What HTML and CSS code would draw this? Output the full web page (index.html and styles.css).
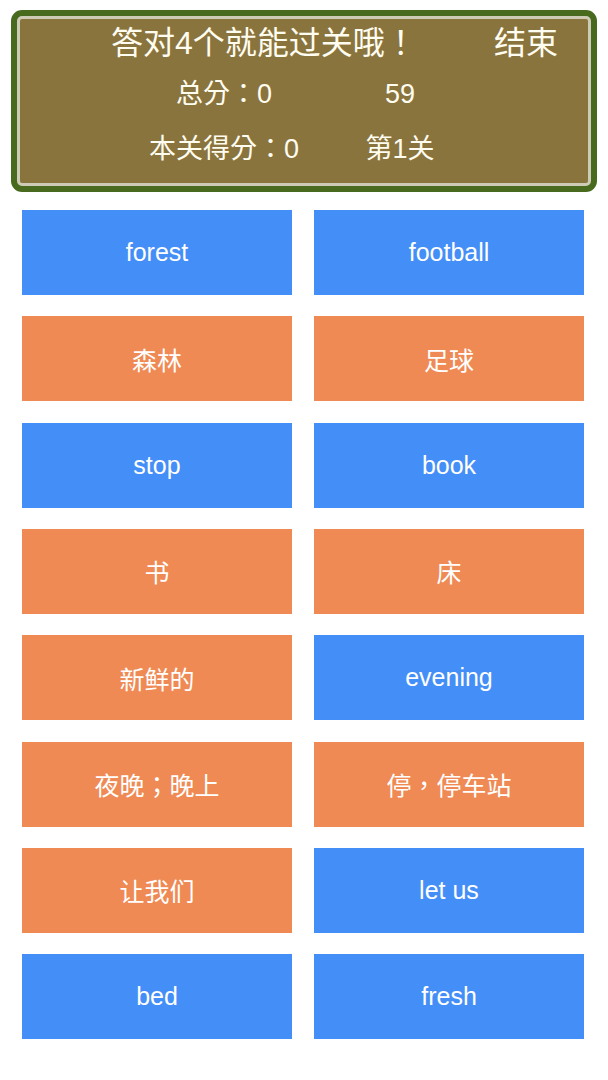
FILE: index.html
```html
<!DOCTYPE html>
<html lang="zh-Hant">
<head>
<meta charset="utf-8">
<title>单词配对</title>
<link rel="stylesheet" href="styles.css">
</head>
<body>
<header class="board">
  <div class="board-inner">
    <div class="title-row">
      <span class="title">答对4个就能过关哦！</span>
      <span class="end">结束</span>
    </div>
    <div class="stat-row stat-row-1">
      <span class="stat">总分：0</span>
      <span class="stat">59</span>
    </div>
    <div class="stat-row stat-row-2">
      <span class="stat">本关得分：0</span>
      <span class="stat">第1关</span>
    </div>
  </div>
</header>
<main class="cards">
  <div class="card blue">forest</div>
  <div class="card blue">football</div>
  <div class="card orange">森林</div>
  <div class="card orange">足球</div>
  <div class="card blue">stop</div>
  <div class="card blue">book</div>
  <div class="card orange">书</div>
  <div class="card orange">床</div>
  <div class="card orange">新鲜的</div>
  <div class="card blue">evening</div>
  <div class="card orange">夜晚；晚上</div>
  <div class="card orange">停，停车站</div>
  <div class="card orange">让我们</div>
  <div class="card blue">let us</div>
  <div class="card blue">bed</div>
  <div class="card blue">fresh</div>
</main>
</body>
</html>
```

FILE: styles.css
```css
html, body {
  margin: 0;
  padding: 0;
  background: #ffffff;
}

body {
  font-family: "Liberation Sans", "Noto Sans CJK TC", sans-serif;
  width: 608px;
  height: 1080px;
  overflow: hidden;
}

.board {
  margin: 10px 11px 0 11px;
  height: 182px;
  box-sizing: border-box;
  border: 6px solid #476a1f;
  border-radius: 11px;
  background: #476a1f;
}

.board-inner {
  box-sizing: border-box;
  height: 100%;
  border: 3px solid #cdcbb6;
  border-radius: 5px;
  background: #8a743e;
  color: #fffcf0;
}

.title-row {
  display: flex;
  justify-content: space-between;
  align-items: center;
  height: 40px;
  margin-top: 4px;
  padding: 0 30px 0 91px;
  font-size: 32px;
  line-height: 40px;
}

.stat-row {
  display: grid;
  grid-template-columns: 1fr 1fr;
  padding: 0 100px 0 116px;
  font-size: 27px;
  line-height: 34px;
  height: 34px;
}

.stat-row-1 {
  margin-top: 14px;
}

.stat-row-2 {
  margin-top: 21px;
}

.stat {
  text-align: center;
  white-space: nowrap;
}

.cards {
  display: grid;
  grid-template-columns: 270px 270px;
  grid-auto-rows: 85px;
  column-gap: 22px;
  row-gap: 21.33px;
  margin-top: 18px;
  padding: 0 24px 0 22px;
}

.card {
  display: flex;
  align-items: center;
  justify-content: center;
  color: #ffffff;
  font-size: 25px;
}

.blue {
  background: #448ef7;
}

.orange {
  background: #ef8a55;
}
```
